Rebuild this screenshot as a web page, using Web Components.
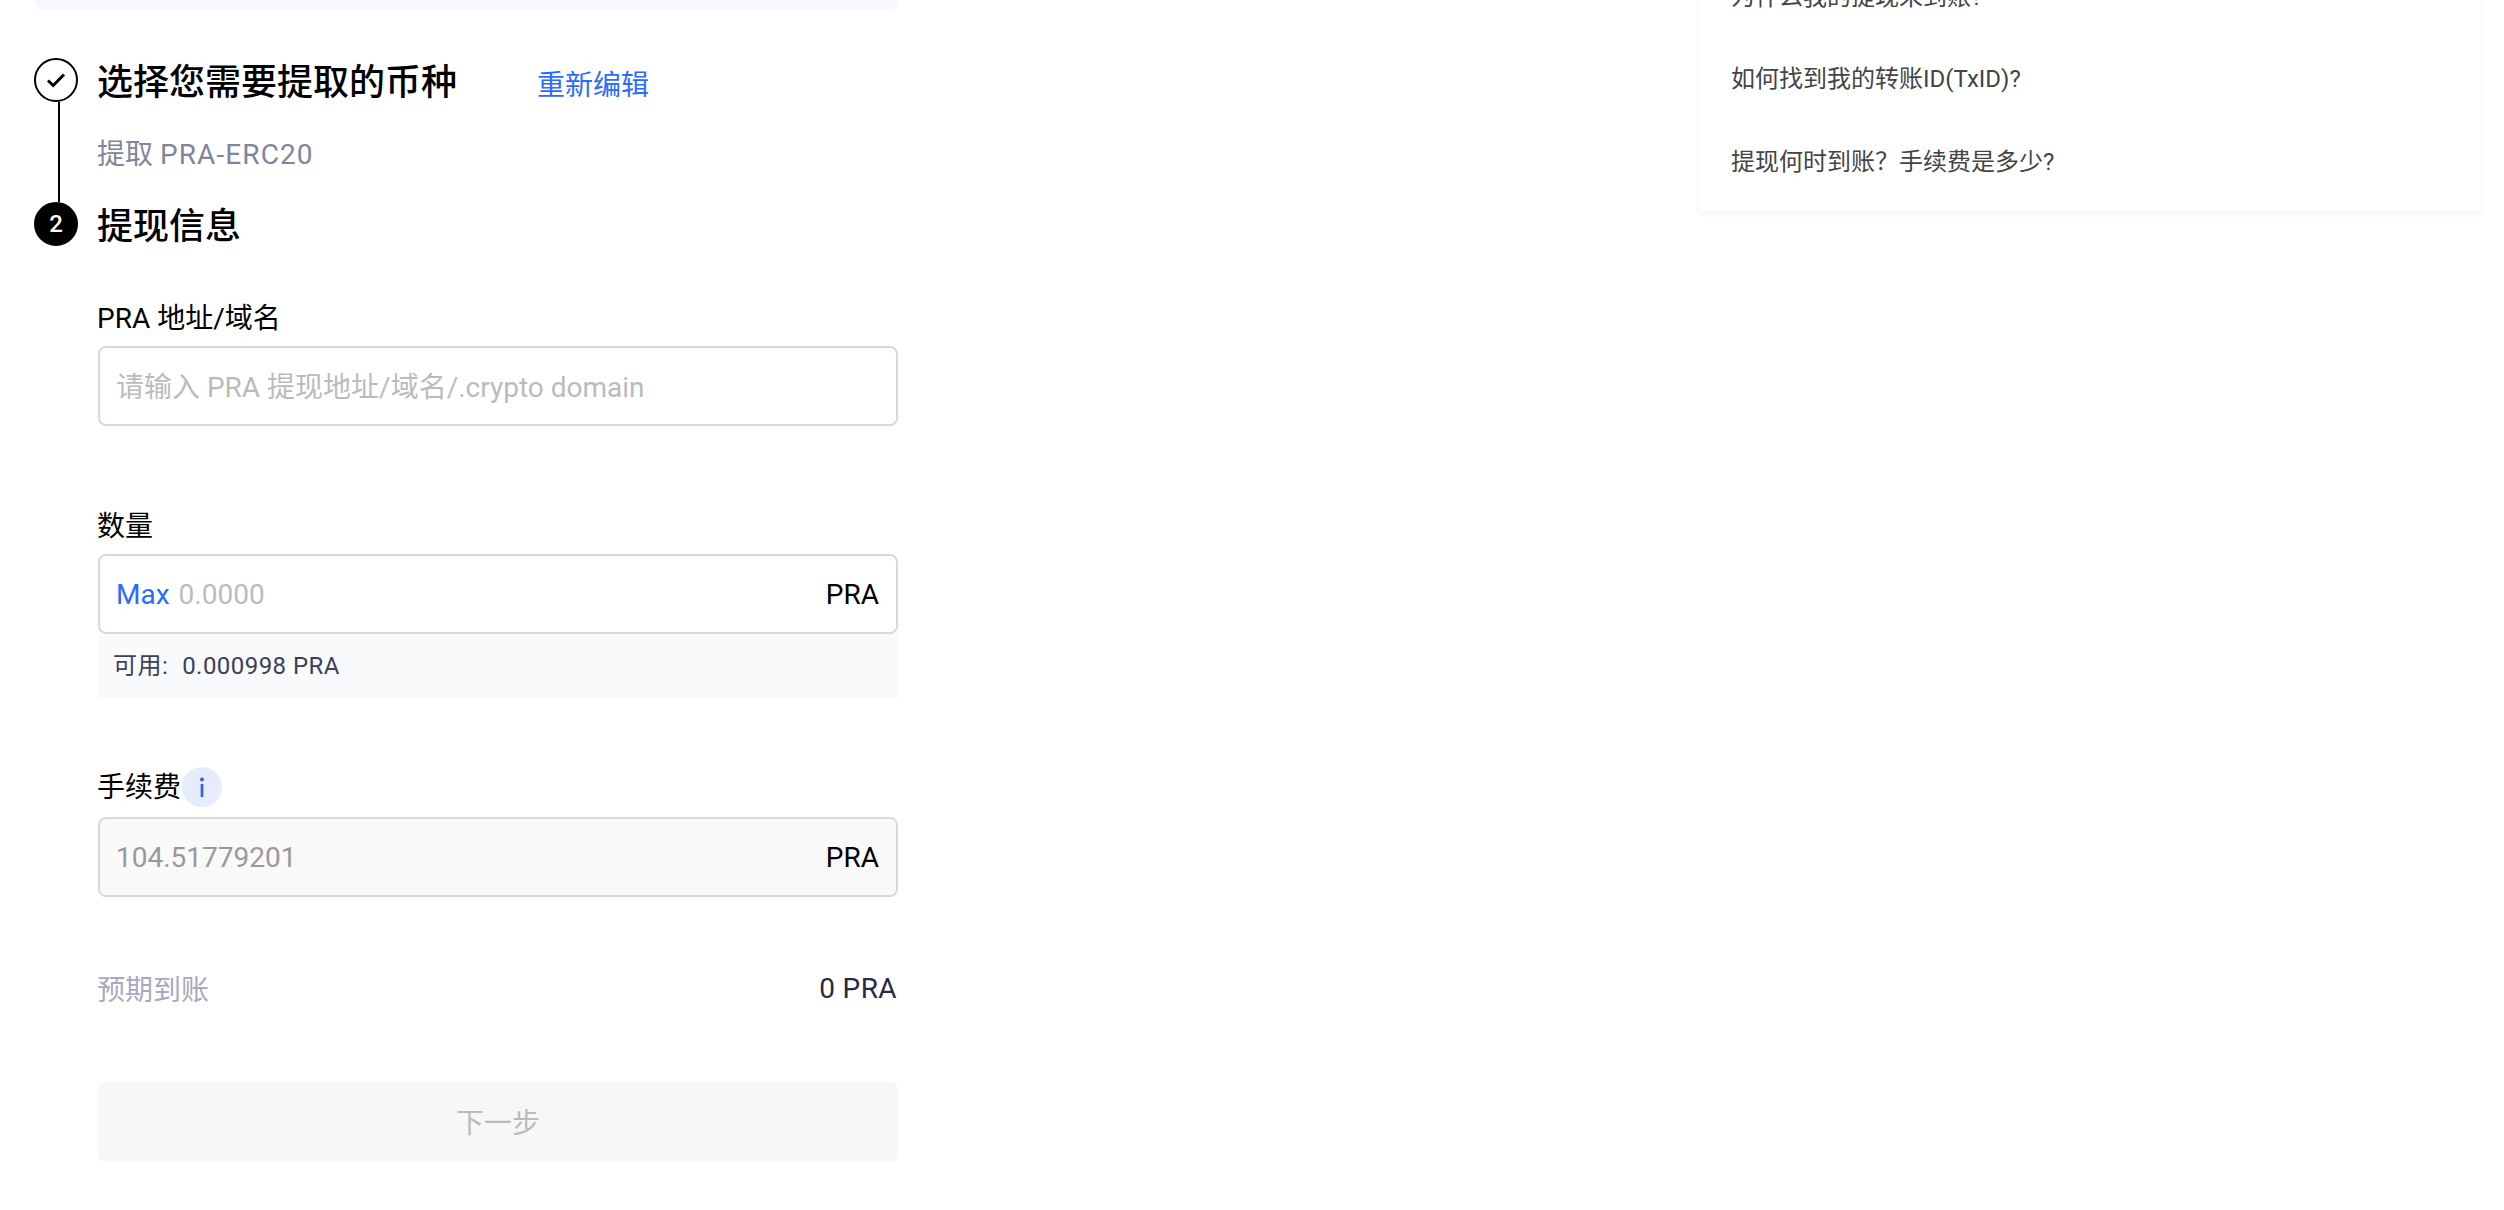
<!DOCTYPE html>
<html lang="zh-CN"><head><meta charset="utf-8"><title>提现</title>
<style>
html,body{margin:0;height:100%;overflow:hidden;background:#fff}
body{font-family:Roboto,"Noto Sans CJK SC",sans-serif;color:#000}
</style></head><body>
<template id="t-page"><style>
:host{display:flex;align-items:flex-start;height:1210px;overflow:hidden}
.left{width:864px;margin-left:34px;flex:none}
.band{height:10px;background:#f6f8fe;border-radius:0 0 10px 10px;margin-bottom:48px}
.right{margin-left:802px;flex:none}
</style><div class="left"><div class="band"></div><slot></slot></div><div class="right"><slot name="aside"></slot></div></template>

<template id="t-step"><style>
:host{display:grid;grid-template-columns:44px 1fr;column-gap:19px}
.rail{display:flex;flex-direction:column}
.dot{width:44px;height:44px;box-sizing:border-box;border-radius:50%;border:2px solid #000;display:flex;align-items:center;justify-content:center;font:500 24px/1 Roboto,sans-serif;background:#fff;flex:none}
:host([active]) .dot{background:#000;color:#fff}
.line{flex:1;width:2px;background:#000;margin-left:24px}
:host([active]) .line{display:none}
.head{display:flex;align-items:center;box-sizing:border-box;height:44px;padding-top:6px;font-size:36px;font-weight:500;line-height:44px}
.edit{font-size:28px;font-weight:400;color:#2b6bff;margin-left:80px;position:relative;top:3px}
</style><div class="rail"><div class="dot"><slot name="mark"></slot></div><div class="line"></div></div>
<div><div class="head"><span><slot name="title"></slot></span><span class="edit"><slot name="edit"></slot></span></div><slot></slot></div></template>

<template id="t-field"><style>
:host{display:block;font-size:28px}
.label{display:flex;align-items:center;box-sizing:border-box;height:40px;padding-top:4px;line-height:36px}
.box{display:flex;align-items:center;box-sizing:border-box;height:80px;margin:9px 0 0 1px;padding:0 17px 0 16px;border:2px solid #d9d9d9;border-radius:8px;background:#fff}
:host([disabled]) .box{background:#f9f9f9}
.main{flex:1;color:#bbb;white-space:nowrap;padding-bottom:var(--main-pad,0)}
:host([disabled]) .main{color:#999}
.unit{color:#000}
::slotted([slot=max]){color:#2b6bff;margin-right:9px}
::slotted([slot=below]){margin-left:1px}
</style><div class="label"><slot name="label"></slot></div>
<div class="box"><slot name="max"></slot><span class="main"><slot></slot></span><span class="unit"><slot name="unit"></slot></span></div><slot name="below"></slot></template>

<template id="t-info"><style>
:host{display:inline-flex;align-items:center;justify-content:center;width:40px;height:40px;border-radius:50%;background:#e6ebfd;margin-left:1px;transform:translateY(-3px)}
</style><svg width="6" height="20" viewBox="0 0 6 20"><circle cx="3" cy="2.4" r="2" fill="#3c62e0"/><rect x="1.6" y="7" width="2.8" height="13" fill="#3c62e0"/></svg></template>

<template id="t-avail"><style>
:host{display:block;box-sizing:border-box;height:64px;padding-left:15px;background:#f9fafc;font-size:24px;line-height:64px;color:#3b4156;letter-spacing:.45px}
.k{margin-right:14px}
</style><span class="k"><slot name="k"></slot></span><slot></slot></template>

<template id="t-summary"><style>
:host{display:flex;justify-content:space-between;align-items:center;height:40px;font-size:28px;padding-right:1px}
.k{color:#a8aabb}.v{color:#252b45;letter-spacing:.4px}
</style><span class="k"><slot name="k"></slot></span><span class="v"><slot></slot></span></template>

<template id="t-btn"><style>
:host{display:flex;align-items:center;justify-content:center;box-sizing:border-box;height:80px;margin-left:1px;padding-bottom:2px;border-radius:8px;background:#f7f7f7;color:#bbb;font-size:28px}
</style><slot></slot></template>

<template id="t-faq"><style>
:host{display:block;box-sizing:border-box;width:780px;margin-top:-24px;height:235px;background:#fff;box-shadow:0 2px 6px rgba(40,50,100,.07);padding-left:31px;font-size:24px;color:#444}
::slotted(div){height:82px;line-height:42px;white-space:nowrap}
::slotted(div:last-child){margin-top:1px}
</style><slot></slot></template>

<w-page>
  <w-step style="height:144px">
    <svg slot="mark" width="20" height="16" viewBox="0 0 20 16"><path d="M2 8.5L7.2 13.5L18 2.5" fill="none" stroke="#000" stroke-width="3"/></svg>
    <span slot="title">选择您需要提取的币种</span>
    <span slot="edit">重新编辑</span>
    <div style="font-size:28px;line-height:40px;color:#80869a;margin-top:33px">提取 <span style="letter-spacing:1.1px">PRA-ERC20</span></div>
  </w-step>
  <w-step active>
    <span slot="mark">2</span>
    <span slot="title">提现信息</span>
    <w-field style="margin-top:51px;--main-pad:3px"><span slot="label">PRA 地址/域名</span>请输入 PRA 提现地址/域名/.crypto domain</w-field>
    <w-field style="margin-top:79px"><span slot="label">数量</span><span slot="max">Max</span>0.0000<span slot="unit">PRA</span><w-avail slot="below"><span slot="k">可用:</span>0.000998 PRA</w-avail></w-field>
    <w-field disabled style="margin-top:70px"><span slot="label">手续费<w-info style="vertical-align:middle"></w-info></span>104.51779201<span slot="unit">PRA</span></w-field>
    <w-summary style="margin-top:71px"><span slot="k">预期到账</span>0 PRA</w-summary>
    <w-btn style="margin-top:74px">下一步</w-btn>
  </w-step>
  <w-faq slot="aside"><div>为什么我的提现未到账?</div><div>如何找到我的转账ID(TxID)?</div><div>提现何时到账？手续费是多少?</div></w-faq>
</w-page>
<script>
for (const [tag,id] of [['w-page','t-page'],['w-step','t-step'],['w-field','t-field'],['w-info','t-info'],['w-avail','t-avail'],['w-summary','t-summary'],['w-btn','t-btn'],['w-faq','t-faq']]) {
  customElements.define(tag, class extends HTMLElement {
    constructor(){super();this.attachShadow({mode:'open'}).appendChild(document.getElementById(id).content.cloneNode(true));}
  });
}
</script>
</body></html>
